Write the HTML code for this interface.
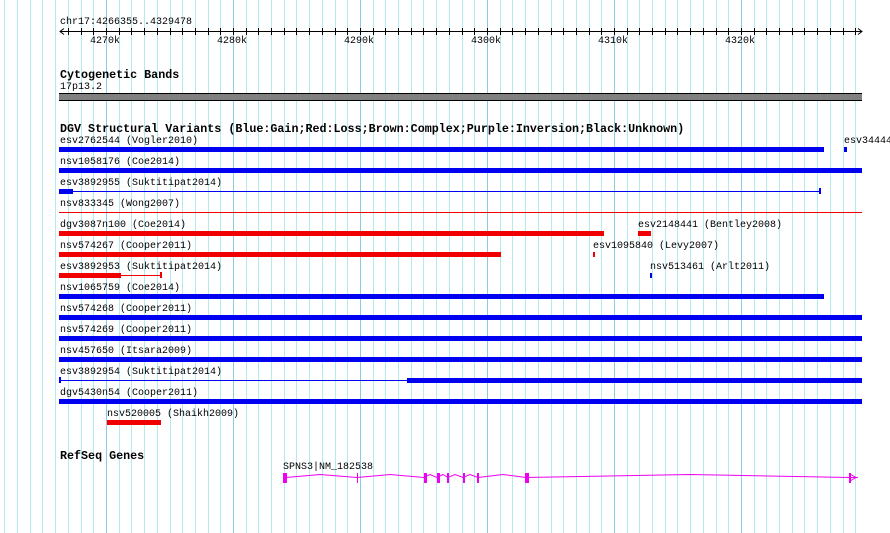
<!DOCTYPE html>
<html><head><meta charset="utf-8"><style>
html,body{margin:0;padding:0;background:#fff;width:890px;height:533px;overflow:hidden;position:relative}
.t{position:absolute;font-family:"Liberation Mono",monospace;font-size:10px;line-height:12px;color:#000;white-space:pre;margin-top:2px}
.h{position:absolute;font-family:"Liberation Mono",monospace;font-size:11.7px;font-weight:bold;line-height:13px;color:#000;white-space:pre;margin-top:2px}
.b{position:absolute;height:5px}
.l{position:absolute;height:1px}
.B{background:#0000f0}.R{background:#f00000}
</style></head><body>
<svg width="890" height="533" style="position:absolute;left:0;top:0" id="g"></svg>
<div class="t" style="left:60px;top:15px">chr17:4266355..4329478</div>
<div class="h" style="left:60px;top:67px">Cytogenetic Bands</div>
<div class="t" style="left:60px;top:80px">17p13.2</div>
<div style="position:absolute;left:59px;top:93px;width:803px;height:6px;background:#808080;border-top:1px solid #000;border-bottom:1px solid #000"></div>
<div class="h" style="left:60px;top:121px">DGV Structural Variants (Blue:Gain;Red:Loss;Brown:Complex;Purple:Inversion;Black:Unknown)</div>

<div class="t" style="left:60px;top:134px">esv2762544 (Vogler2010)</div>
<div class="b B" style="left:59px;top:147px;width:765px"></div>
<div class="t" style="left:844px;top:134px">esv34444</div>
<div class="b B" style="left:844px;top:147px;width:3px"></div>

<div class="t" style="left:60px;top:155px">nsv1058176 (Coe2014)</div>
<div class="b B" style="left:59px;top:168px;width:803px"></div>

<div class="t" style="left:60px;top:176px">esv3892955 (Suktitipat2014)</div>
<div class="b B" style="left:59px;top:189px;width:14px"></div>
<div class="l B" style="left:59px;top:191px;width:762px"></div>
<div class="B" style="position:absolute;left:819px;top:188px;width:2px;height:6px"></div>

<div class="t" style="left:60px;top:197px">nsv833345 (Wong2007)</div>
<div class="l R" style="left:59px;top:212px;width:803px"></div>

<div class="t" style="left:60px;top:218px">dgv3087n100 (Coe2014)</div>
<div class="b R" style="left:59px;top:231px;width:545px"></div>
<div class="t" style="left:638px;top:218px">esv2148441 (Bentley2008)</div>
<div class="b R" style="left:638px;top:231px;width:13px"></div>

<div class="t" style="left:60px;top:239px">nsv574267 (Cooper2011)</div>
<div class="b R" style="left:59px;top:252px;width:442px"></div>
<div class="t" style="left:593px;top:239px">esv1095840 (Levy2007)</div>
<div class="b R" style="left:593px;top:252px;width:2px"></div>

<div class="t" style="left:60px;top:260px">esv3892953 (Suktitipat2014)</div>
<div class="b R" style="left:59px;top:273px;width:62px"></div>
<div class="l R" style="left:59px;top:275px;width:102px"></div>
<div class="R" style="position:absolute;left:160px;top:272px;width:2px;height:6px"></div>
<div class="t" style="left:650px;top:260px">nsv513461 (Arlt2011)</div>
<div class="b B" style="left:650px;top:273px;width:2px"></div>

<div class="t" style="left:60px;top:281px">nsv1065759 (Coe2014)</div>
<div class="b B" style="left:59px;top:294px;width:765px"></div>

<div class="t" style="left:60px;top:302px">nsv574268 (Cooper2011)</div>
<div class="b B" style="left:59px;top:315px;width:803px"></div>

<div class="t" style="left:60px;top:323px">nsv574269 (Cooper2011)</div>
<div class="b B" style="left:59px;top:336px;width:803px"></div>

<div class="t" style="left:60px;top:344px">nsv457650 (Itsara2009)</div>
<div class="b B" style="left:59px;top:357px;width:803px"></div>

<div class="t" style="left:60px;top:365px">esv3892954 (Suktitipat2014)</div>
<div class="B" style="position:absolute;left:59px;top:377px;width:2px;height:6px"></div>
<div class="l B" style="left:59px;top:380px;width:348px"></div>
<div class="b B" style="left:407px;top:378px;width:455px"></div>

<div class="t" style="left:60px;top:386px">dgv5430n54 (Cooper2011)</div>
<div class="b B" style="left:59px;top:399px;width:803px"></div>

<div class="t" style="left:107px;top:407px">nsv520005 (Shaikh2009)</div>
<div class="b R" style="left:107px;top:420px;width:54px"></div>

<div class="h" style="left:60px;top:448px">RefSeq Genes</div>
<div class="t" style="left:283px;top:460px">SPNS3|NM_182538</div>
<svg width="890" height="533" style="position:absolute;left:0;top:0">
<g fill="none" stroke="#f000f0" stroke-width="1">
<polyline points="286,477.5 320,474.5 357,477.5 390,474.5 424,477.5 430,474.5 437,477.5 443,474.5 448,477.5 455,474.5 463,477.5 470,474.5 478,477.5 503,474.5 526,477.5 690,474.5 850,477.5"/>
<polyline points="850,474 856,477.5 850,481"/>
<line x1="850" y1="477.5" x2="858" y2="477.5"/>
</g>
<g fill="#f000f0">
<rect x="283" y="473" width="4" height="10"/>
<rect x="357" y="473" width="1" height="10"/>
<rect x="424" y="473" width="3" height="10"/>
<rect x="437" y="473" width="3" height="10"/>
<rect x="447" y="473" width="2" height="10"/>
<rect x="463" y="473" width="2" height="10"/>
<rect x="477" y="473" width="2" height="10"/>
<rect x="525" y="473" width="4" height="10"/>
<rect x="849" y="473" width="2" height="10"/>
</g>
</svg>
<div class="t" style="left:90px;top:34px">4270k</div>
<div class="t" style="left:217px;top:34px">4280k</div>
<div class="t" style="left:344px;top:34px">4290k</div>
<div class="t" style="left:471px;top:34px">4300k</div>
<div class="t" style="left:598px;top:34px">4310k</div>
<div class="t" style="left:725px;top:34px">4320k</div>
<script>
var s=document.getElementById('g'),h='';
for(var k=0;;k++){var x=4.4+12.7*k;if(x>858)break;var xx=Math.round(x)+0.5;var maj=(k%10==8);
h+='<line x1="'+xx+'" y1="0" x2="'+xx+'" y2="533" stroke="'+(maj?'#8ccaea':'#b2eaf0')+'" stroke-width="1"/>';
if(xx>60&&xx<860)h+='<line x1="'+xx+'" y1="28" x2="'+xx+'" y2="35" stroke="#000"/>';}
h+='<line x1="60" y1="31.5" x2="862" y2="31.5" stroke="#000"/>';
h+='<polyline points="64,28.5 60,31.5 64,34.5" fill="none" stroke="#000"/>';
h+='<polyline points="858,28.5 862,31.5 858,34.5" fill="none" stroke="#000"/>';
s.innerHTML=h;
</script>
</body></html>
